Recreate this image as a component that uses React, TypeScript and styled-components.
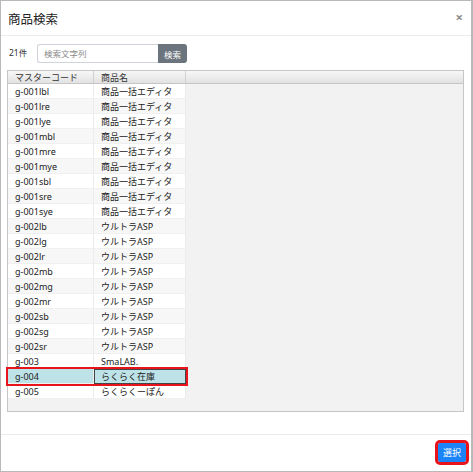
import styled, { createGlobalStyle } from 'styled-components'

const GlobalStyle = createGlobalStyle`
    html, body {
        margin: 0;
        padding: 0;
        background: #fff;
    }
    * {
        box-sizing: border-box;
    }
`

const font = `"Noto Sans", "Noto Sans CJK JP", sans-serif`

const Modal = styled.div`
    width: 473px;
    height: 472px;
    border: 1px solid #b9b9b9;
    border-right-width: 2px;
    display: flex;
    flex-direction: column;
    font-family: ${font};
    color: #333;
    background: #fff;
`

const Header = styled.div`
    height: 35px;
    flex: none;
    display: flex;
    align-items: center;
    justify-content: space-between;
    padding: 0 8px 0 7px;
    border-bottom: 1px solid #e9ecef;
`

const Title = styled.h1`
    margin: 0;
    font-size: 12.5px;
    font-weight: 400;
    color: #222;
`

const Close = styled.span`
    font-size: 13px;
    font-weight: 700;
    color: #8c8c8c;
    line-height: 1;
    margin-top: -2px;
`

const Body = styled.div`
    flex: 1;
    padding: 8px 7px 0 6px;
    border-bottom: 1px solid #e9ecef;
`

const Toolbar = styled.div`
    display: flex;
    align-items: center;
    height: 19px;
    margin-bottom: 7px;
`

const Count = styled.span`
    font-size: 8.5px;
    width: 30px;
    padding-left: 2px;
    margin-top: -4px;
`

const SearchInput = styled.input`
    width: 121px;
    height: 19px;
    border: 1px solid #ced4da;
    border-right: none;
    border-radius: 3px 0 0 3px;
    padding: 0 6px;
    font-family: ${font};
    font-size: 8.5px;
    color: #333;
    outline: none;

    &::placeholder {
        color: #8a8a8a;
    }
`

const SearchButton = styled.button`
    width: 29px;
    height: 19px;
    border: none;
    border-radius: 0 3px 3px 0;
    background: #6c757d;
    color: #fff;
    font-family: ${font};
    font-size: 8.5px;
    padding: 0;
`

const Grid = styled.div`
    width: 457px;
    height: 342px;
    border: 1px solid #c6c6c6;
    background: #f2f2f2;
`

const HeadRow = styled.div`
    display: flex;
    height: 13px;
    background: linear-gradient(#f7f7f7, #e2e2e2);
    border-bottom: 1px solid #c6c6c6;
`

const HeadCell = styled.div<{ $w?: number }>`
    width: ${(p) => (p.$w ? `${p.$w}px` : 'auto')};
    flex: ${(p) => (p.$w ? 'none' : 1)};
    font-size: 9px;
    line-height: 13px;
    padding-left: 7px;
    color: #333;
    border-right: 1px solid ${(p) => (p.$w ? '#d0d0d0' : 'transparent')};
    white-space: nowrap;
`

const Row = styled.div<{ $odd: boolean; $selected: boolean }>`
    display: flex;
    width: 178px;
    height: 15px;
    background: ${(p) => (p.$selected ? '#bde3e8' : p.$odd ? '#f7f7f7' : '#fff')};
    outline: ${(p) => (p.$selected ? '2px solid #e8141c' : 'none')};
    outline-offset: 0;
    position: relative;
    z-index: ${(p) => (p.$selected ? 1 : 0)};
`

const Cell = styled.div<{ $w: number; $focus?: boolean }>`
    width: ${(p) => p.$w}px;
    flex: none;
    font-size: 9px;
    line-height: 15px;
    padding-left: 7px;
    color: #222;
    border-right: 1px solid #ececec;
    border-bottom: 1px solid #f0f0f0;
    white-space: nowrap;
    ${(p) =>
        p.$focus &&
        `
        border: 1px solid #444;
        line-height: 13px;
        padding-left: 6px;
    `}
`

const Footer = styled.div`
    height: 36px;
    flex: none;
    display: flex;
    align-items: center;
    justify-content: flex-end;
    padding: 0 5px 2px 0;
`

const SelectButton = styled.button`
    height: 19px;
    padding: 0 5px;
    border: none;
    border-radius: 2px;
    background: #1a84f8;
    color: #fff;
    font-family: ${font};
    font-size: 9px;
    outline: 3px solid #e8141c;
    outline-offset: 0;
`

const items: [string, string][] = [
    ['g-001lbl', '商品一括エディタ'],
    ['g-001lre', '商品一括エディタ'],
    ['g-001lye', '商品一括エディタ'],
    ['g-001mbl', '商品一括エディタ'],
    ['g-001mre', '商品一括エディタ'],
    ['g-001mye', '商品一括エディタ'],
    ['g-001sbl', '商品一括エディタ'],
    ['g-001sre', '商品一括エディタ'],
    ['g-001sye', '商品一括エディタ'],
    ['g-002lb', 'ウルトラASP'],
    ['g-002lg', 'ウルトラASP'],
    ['g-002lr', 'ウルトラASP'],
    ['g-002mb', 'ウルトラASP'],
    ['g-002mg', 'ウルトラASP'],
    ['g-002mr', 'ウルトラASP'],
    ['g-002sb', 'ウルトラASP'],
    ['g-002sg', 'ウルトラASP'],
    ['g-002sr', 'ウルトラASP'],
    ['g-003', 'SmaLAB.'],
    ['g-004', 'らくらく在庫'],
    ['g-005', 'らくらくーぽん'],
]

const selectedCode = 'g-004'

const App = () => {
    return (
        <>
            <GlobalStyle />
            <Modal>
                <Header>
                    <Title>商品検索</Title>
                    <Close>×</Close>
                </Header>
                <Body>
                    <Toolbar>
                        <Count>{items.length}件</Count>
                        <SearchInput placeholder="検索文字列" />
                        <SearchButton>検索</SearchButton>
                    </Toolbar>
                    <Grid>
                        <HeadRow>
                            <HeadCell $w={86}>マスターコード</HeadCell>
                            <HeadCell $w={92}>商品名</HeadCell>
                            <HeadCell />
                        </HeadRow>
                        {items.map(([code, name], i) => {
                            const selected = code === selectedCode
                            return (
                                <Row key={code} $odd={i % 2 === 1} $selected={selected}>
                                    <Cell $w={86}>{code}</Cell>
                                    <Cell $w={92} $focus={selected}>
                                        {name}
                                    </Cell>
                                </Row>
                            )
                        })}
                    </Grid>
                </Body>
                <Footer>
                    <SelectButton>選択</SelectButton>
                </Footer>
            </Modal>
        </>
    )
}

export default App
